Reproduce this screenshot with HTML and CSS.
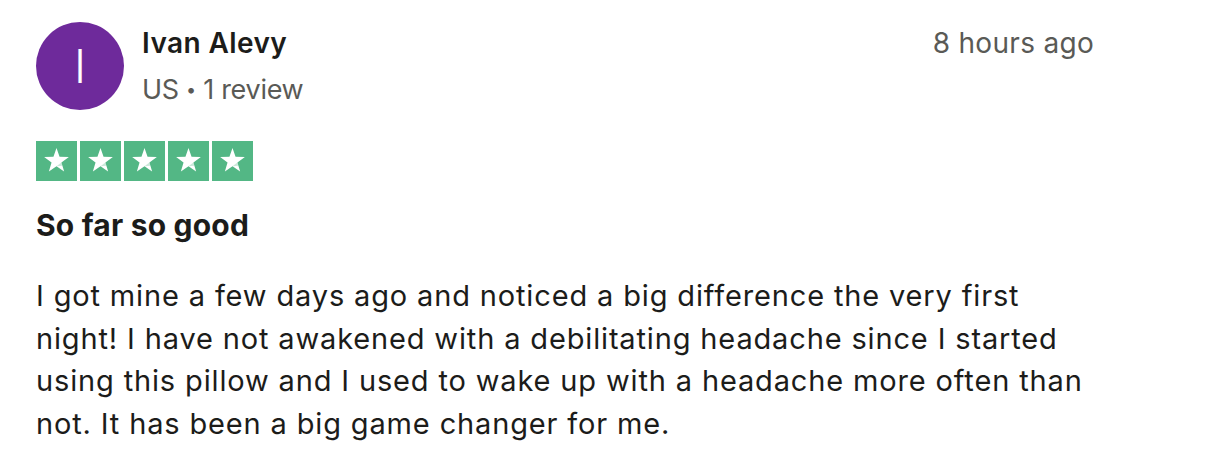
FILE: index.html
```html
<!DOCTYPE html>
<html lang="en">
<head>
<meta charset="utf-8">
<title>Review</title>
<link rel="stylesheet" href="styles.css">
</head>
<body>
<article class="review">
  <header class="review-header">
    <div class="avatar">I</div>
    <div class="consumer">
      <div class="consumer-name">Ivan Alevy</div>
      <div class="consumer-meta">US <span class="dot">•</span> 1 review</div>
    </div>
    <time class="review-date">8 hours ago</time>
  </header>
  <div class="stars" aria-label="Rated 5 out of 5">
    <span class="star"><svg viewBox="0 0 40 40" width="41" height="40"><polygon fill="#fff" points="20,7 23.06,15.79 32.36,15.98 24.95,21.61 27.64,30.52 20,25.2 12.36,30.52 15.05,21.61 7.64,15.98 16.94,15.79"/><polygon class="fold" points="24.95,21.61 25.9,24.8 20,25.2"/></svg></span>
    <span class="star"><svg viewBox="0 0 40 40" width="41" height="40"><polygon fill="#fff" points="20,7 23.06,15.79 32.36,15.98 24.95,21.61 27.64,30.52 20,25.2 12.36,30.52 15.05,21.61 7.64,15.98 16.94,15.79"/><polygon class="fold" points="24.95,21.61 25.9,24.8 20,25.2"/></svg></span>
    <span class="star"><svg viewBox="0 0 40 40" width="41" height="40"><polygon fill="#fff" points="20,7 23.06,15.79 32.36,15.98 24.95,21.61 27.64,30.52 20,25.2 12.36,30.52 15.05,21.61 7.64,15.98 16.94,15.79"/><polygon class="fold" points="24.95,21.61 25.9,24.8 20,25.2"/></svg></span>
    <span class="star"><svg viewBox="0 0 40 40" width="41" height="40"><polygon fill="#fff" points="20,7 23.06,15.79 32.36,15.98 24.95,21.61 27.64,30.52 20,25.2 12.36,30.52 15.05,21.61 7.64,15.98 16.94,15.79"/><polygon class="fold" points="24.95,21.61 25.9,24.8 20,25.2"/></svg></span>
    <span class="star"><svg viewBox="0 0 40 40" width="41" height="40"><polygon fill="#fff" points="20,7 23.06,15.79 32.36,15.98 24.95,21.61 27.64,30.52 20,25.2 12.36,30.52 15.05,21.61 7.64,15.98 16.94,15.79"/><polygon class="fold" points="24.95,21.61 25.9,24.8 20,25.2"/></svg></span>
  </div>
  <h2 class="review-title">So far so good</h2>
  <p class="review-text">I got mine a few days ago and noticed a big difference the very first night! I have not awakened with a debilitating headache since I started using this pillow and I used to wake up with a headache more often than not. It has been a big game changer for me.</p>
</article>
</body>
</html>
```

FILE: styles.css
```css
* { box-sizing: border-box; }
html, body { margin: 0; padding: 0; background: #ffffff; }
body {
  font-family: Inter, "Noto Sans", "Liberation Sans", sans-serif;
  color: #1c1c1a;
}
.review {
  width: 1094px;
  padding: 22px 0 0 36px;
}
.review-header {
  display: flex;
  align-items: flex-start;
}
.avatar {
  width: 88px;
  height: 88px;
  border-radius: 50%;
  background: #6e2a9b;
  color: #ffffff;
  font-size: 46px;
  font-weight: 300;
  display: flex;
  align-items: center;
  justify-content: center;
  flex: none;
}
.consumer {
  margin-left: 18px;
  flex: 1;
  padding-top: 1px;
}
.consumer-name {
  font-size: 28px;
  font-weight: 600;
  line-height: 40px;
  letter-spacing: 0.4px;
  color: #1c1c1a;
}
.consumer-meta {
  font-size: 27px;
  line-height: 40px;
  margin-top: 7px;
  color: #5a5a56;
  letter-spacing: -0.3px;
}
.dot { font-size: 18px; vertical-align: 3px; }
.review-date {
  font-size: 28px;
  line-height: 40px;
  padding-top: 1px;
  color: #5a5a56;
  letter-spacing: 0.3px;
}
.stars {
  display: flex;
  gap: 3px;
  margin-top: 31px;
}
.star {
  display: block;
  width: 41px;
  height: 40px;
  background: #53b785;
}
.star svg { display: block; }
.fold { fill: #53b785; opacity: 0.3; }
.review-title {
  margin: 24px 0 0;
  font-size: 30px;
  font-weight: 700;
  line-height: 40px;
  letter-spacing: 0.2px;
}
.review-text {
  width: 1060px;
  margin: 30px 0 0;
  font-size: 29px;
  line-height: 42.7px;
  letter-spacing: 0.85px;
}
```
